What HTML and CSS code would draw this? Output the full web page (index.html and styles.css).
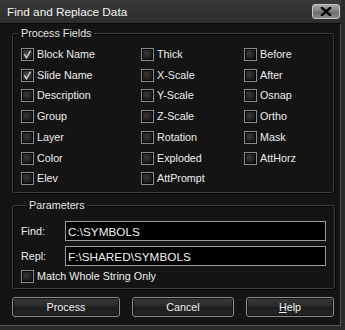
FILE: index.html
```html
<!DOCTYPE html>
<html lang="en">
  <head>
    <meta charset="UTF-8" />
    <title>Find and Replace Data</title>
    <link rel="stylesheet" href="styles.css">
  </head>
  <body>
    <div class="window">
      <div class="titlebar">
        <span class="title">Find and Replace Data</span>
        <button class="close" type="button" aria-label="Close">
          <svg width="14" height="9" viewBox="0 0 14 9" aria-hidden="true">
            <path d="M3 1 L11 8 M11 1 L3 8" stroke="#000" stroke-width="2.4" stroke-linecap="square" />
          </svg>
        </button>
      </div>

      <div class="content">
        <fieldset class="group fields">
          <legend>Process Fields</legend>
          <div class="grid">
            <label class="check on">
              <span class="box">
                <svg width="11" height="11" viewBox="0 0 11 11" aria-hidden="true">
                  <path d="M2.3 5.2 L4.4 8.6 L8.7 1.6" fill="none" stroke="#c4c4c4" stroke-width="1.6" />
                </svg>
              </span>Block Name
            </label>
            <label class="check on">
              <span class="box">
                <svg width="11" height="11" viewBox="0 0 11 11" aria-hidden="true">
                  <path d="M2.3 5.2 L4.4 8.6 L8.7 1.6" fill="none" stroke="#c4c4c4" stroke-width="1.6" />
                </svg>
              </span>Slide Name
            </label>
            <label class="check"><span class="box"></span>Description</label>
            <label class="check"><span class="box"></span>Group</label>
            <label class="check"><span class="box"></span>Layer</label>
            <label class="check"><span class="box"></span>Color</label>
            <label class="check"><span class="box"></span>Elev</label>

            <label class="check"><span class="box"></span>Thick</label>
            <label class="check"><span class="box"></span>X-Scale</label>
            <label class="check"><span class="box"></span>Y-Scale</label>
            <label class="check"><span class="box"></span>Z-Scale</label>
            <label class="check"><span class="box"></span>Rotation</label>
            <label class="check"><span class="box"></span>Exploded</label>
            <label class="check"><span class="box"></span>AttPrompt</label>

            <label class="check"><span class="box"></span>Before</label>
            <label class="check"><span class="box"></span>After</label>
            <label class="check"><span class="box"></span>Osnap</label>
            <label class="check"><span class="box"></span>Ortho</label>
            <label class="check"><span class="box"></span>Mask</label>
            <label class="check"><span class="box"></span>AttHorz</label>
          </div>
        </fieldset>

        <fieldset class="group params">
          <legend>Parameters</legend>
          <div class="field">
            <span class="name">Find:</span>
            <input type="text" value="C:\SYMBOLS" />
          </div>
          <div class="field">
            <span class="name">Repl:</span>
            <input type="text" value="F:\SHARED\SYMBOLS" />
          </div>
          <label class="check"><span class="box"></span>Match Whole String Only</label>
        </fieldset>

        <div class="buttons">
          <button type="button" class="process">Process</button>
          <button type="button" class="cancel">Cancel</button>
          <button type="button" class="help"><u>H</u>elp</button>
        </div>
      </div>
    </div>
  </body>
</html>
```

FILE: styles.css
```css
/* Global styles */
* {
  margin: 0;
  padding: 0;
  box-sizing: border-box;
}
body {
  background: #000;
  color: #ececec;
  font: 10.75px/13px "Liberation Sans", sans-serif;
}
button,
input {
  font: inherit;
  color: inherit;
}

/* Window frame */
.window {
  width: 345px;
  height: 330px;
  display: flex;
  flex-direction: column;
  background: #141414;
  border-right: 4px solid #2a2a2a;
  border-bottom: 4px solid #2a2a2a;
  box-shadow: inset -1px -1px 0 #555;
}
.titlebar {
  height: 24px;
  display: flex;
  align-items: center;
  justify-content: space-between;
  padding: 0 1px 1px 7px;
  background: linear-gradient(#3a3a3a, #2c2c2c);
  border-bottom: 1px solid #0a0a0a;
}
.title {
  font-size: 11.75px;
  color: #f4f4f4;
}
.close {
  width: 28px;
  height: 15px;
  display: grid;
  place-items: center;
  border: 1px solid #c8c8c8;
  border-radius: 3px;
  background: linear-gradient(#a8a8a8, #7a7a7a 50%, #6a6a6a 51%, #8a8a8a);
}

.content {
  padding: 3px 7px 0 12px;
}

/*
  [1] Group boxes
*/
.group {
  border: 1px solid #3c3c3c;
  border-radius: 3px;
  box-shadow: 1px 1px 0 #050505, inset 1px 1px 0 #050505;
}
.group legend {
  margin-left: 6px;
  padding: 0 2px;
  color: #e4e4e4;
}
.fields {
  height: 166px;
}
.grid {
  display: grid;
  grid-auto-flow: column;
  grid-template-rows: repeat(7, 20.75px);
  grid-template-columns: 120px 103px 1fr;
  padding: 4px 0 0 8px;
}

/* Checkbox */
.check {
  gap: 3px;
  display: flex;
  align-items: center;
}
.check .box {
  width: 13px;
  height: 13px;
  flex: none;
  display: grid;
  place-items: center;
  border: 1px solid #8a8a8a;
  background: radial-gradient(circle at 40% 40%, #3a3a3a, #101010 80%);
  box-shadow: inset 0 0 0 1px #050505;
}
.check.on .box {
  background: radial-gradient(circle at 40% 40%, #4a4a4a, #1a1a1a 80%);
}

/*
  [2] Parameters
*/
.params {
  height: 90px;
  margin-top: 6px;
  padding: 9px 8px 0 8px;
}
.field {
  display: flex;
  align-items: center;
  margin-bottom: 5px;
}
.field .name {
  width: 44px;
}
.field input {
  width: 261px;
  height: 20px;
  padding: 0 2px;
  border: 1px solid #9c9c9c;
  background: #000;
  font-size: 11.75px;
  color: #f0f0f0;
  outline: none;
}
.params .check {
  margin-top: -1px;
}

/*
  [3] Buttons
*/
.buttons {
  display: flex;
  margin-top: 8px;
  gap: 12px;
}
.buttons button {
  height: 20px;
  border: 1px solid #8c8c8c;
  border-radius: 3px;
  background: linear-gradient(#3c3c3c, #262626 50%, #1c1c1c 51%, #262626);
  box-shadow: inset 0 0 0 1px #111;
  color: #f2f2f2;
}
.buttons .process {
  width: 108px;
}
.buttons .cancel {
  width: 102px;
}
.buttons .help {
  width: 88px;
}
```
